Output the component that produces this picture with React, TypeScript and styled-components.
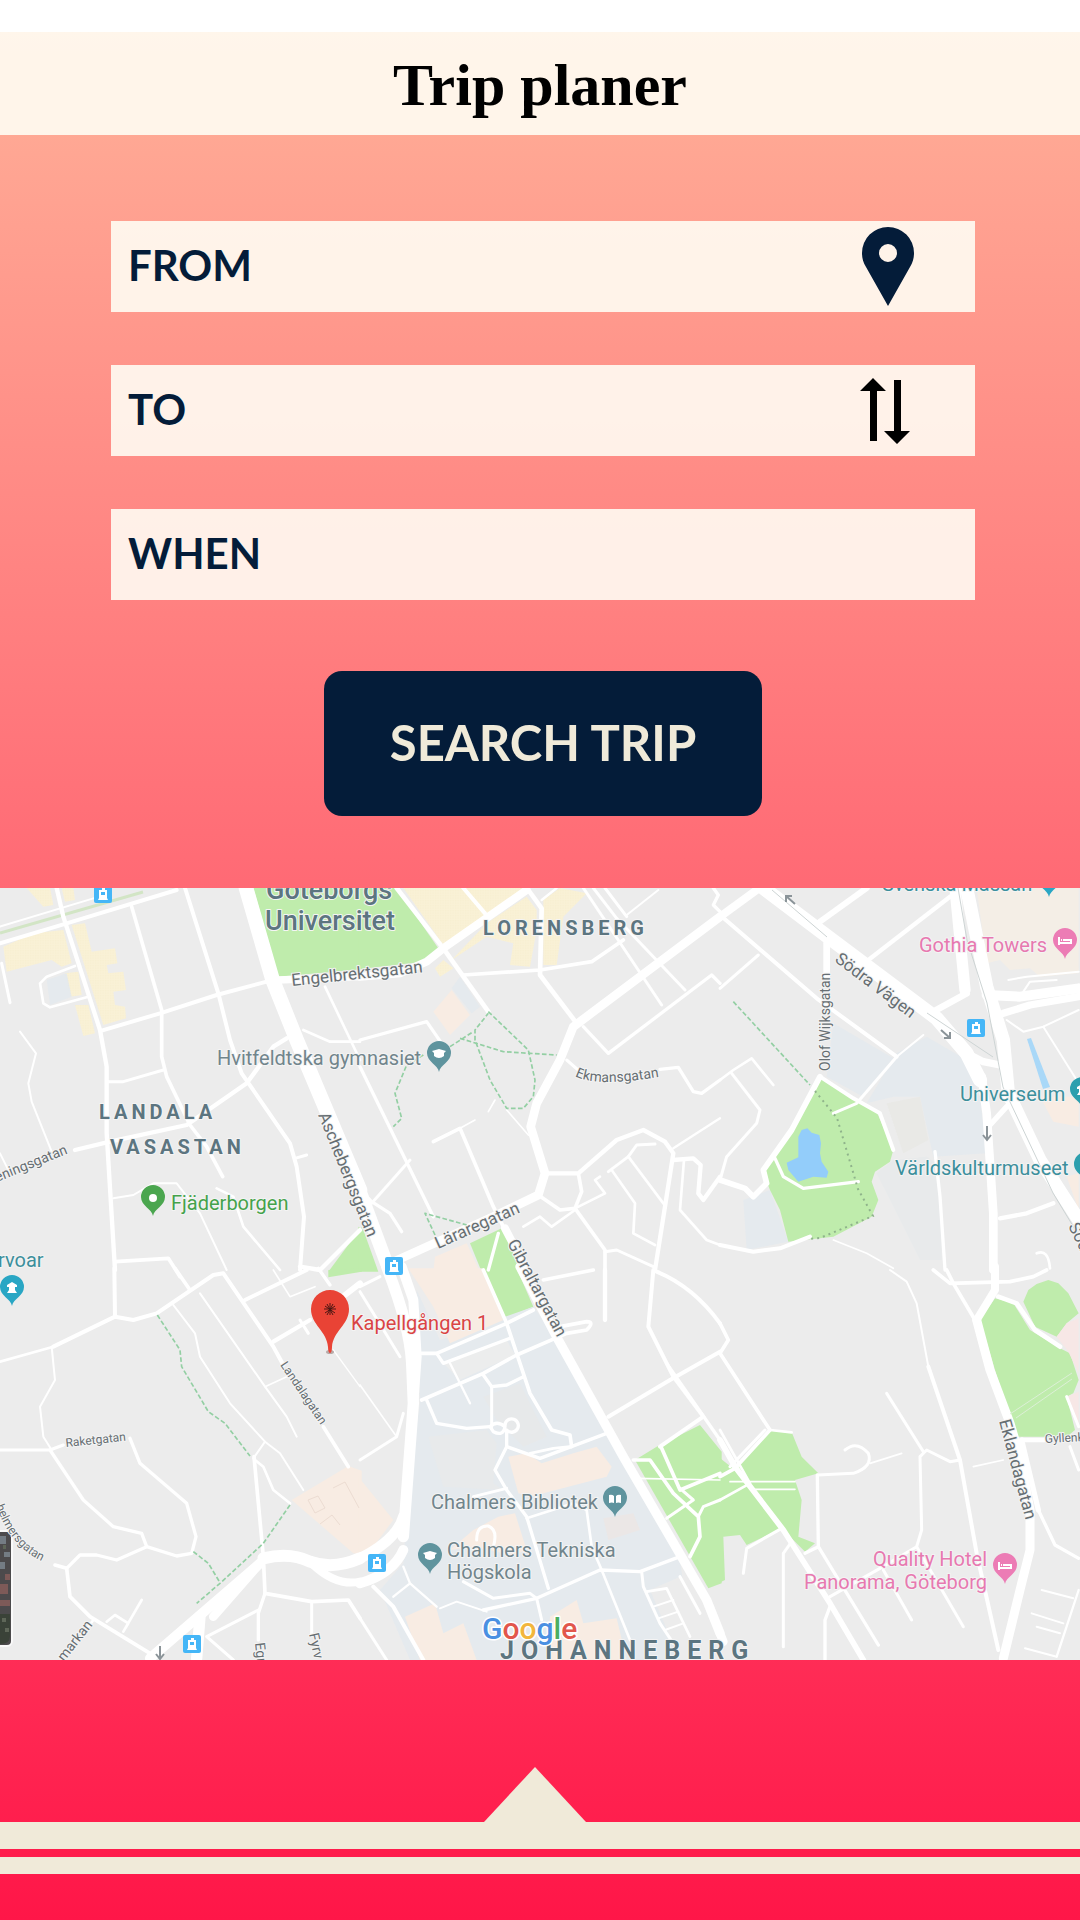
import React from "react";
import styled, { createGlobalStyle } from "styled-components";

const NAVY = "#041c39";
const CREAM = "#f0ead9";
const VEIL = "rgba(255, 255, 246, 0.88)";

const GlobalStyle = createGlobalStyle`
  *, *::before, *::after { box-sizing: border-box; }
  body { margin: 0; background: #ffffff; font-family: Lato, "Open Sans", sans-serif; }
`;

const Page = styled.div`
  display: flex;
  flex-direction: column;
  min-height: 100vh;
  padding-top: 32px;
`;

const Screen = styled.div`
  display: flex;
  flex: 1;
  flex-direction: column;
  background: linear-gradient(#ffb098 0%, #ff6a75 45%, #ff2d56 86%, #ff1648 100%);
`;

const Header = styled.header`
  display: flex;
  justify-content: center;
  padding: 18px 24px 15px;
  background: ${VEIL};
`;

const Title = styled.h1`
  margin: 0;
  color: #000000;
  font: 700 60px/70px "Liberation Serif", serif;
`;

const TripForm = styled.form`
  display: flex;
  flex-direction: column;
  align-items: center;
  padding: 86px 105px 72px 111px;
`;

const Fields = styled.div`
  display: flex;
  flex-direction: column;
  gap: 53px;
  width: 100%;
  margin-bottom: 71px;
`;

const Field = styled.div`
  display: flex;
  align-items: center;
  height: 91px;
  padding: 0 61px 0 17px;
  background: ${VEIL};
`;

const FieldLabel = styled.label`
  padding-bottom: 4px;
  color: ${NAVY};
  font-size: 42px;
  font-weight: 700;
  line-height: 52px;
`;

const FieldInput = styled.input`
  flex: 1;
  min-width: 0;
  height: 100%;
  padding: 0 16px;
  border: 0;
  outline: 0;
  background: transparent;
  color: ${NAVY};
  font: 400 36px/44px Lato, sans-serif;
`;

const IconButton = styled.button`
  display: flex;
  padding: 0;
  border: 0;
  background: transparent;
  cursor: pointer;
`;

const SearchButton = styled.button`
  width: 438px;
  max-width: 100%;
  padding: 41px 24px 44px;
  border: 0;
  border-radius: 18px;
  background: ${NAVY};
  color: ${CREAM};
  font: 700 49px/60px Lato, sans-serif;
  cursor: pointer;
`;

const MapFrame = styled.section`
  display: flex;
  background: #ececec;
`;

const MapDrawing = styled.svg`
  display: block;
  width: 100%;
  height: auto;
  font-family: Roboto, sans-serif;
`;

const Footer = styled.footer`
  display: flex;
  flex: 1;
  flex-direction: column;
  padding-top: 107px;
`;

const PanelHandle = styled.div`
  display: flex;
  justify-content: center;
  padding-right: 10px;
`;

const Stripe = styled.div<{ $size: number; $after: number }>`
  height: ${(p) => p.$size}px;
  margin-bottom: ${(p) => p.$after}px;
  background: ${CREAM};
`;

type Shape = [fill: string, points: string];
type Road = [width: number, path: string];

interface Tile {
  x: number;
  y: number;
  areas: Shape[];
  roads: Road[];
  paths?: string[];
}

const GREEN = "#bfecac";
const SAND = "#f9f1d6";
const PEACH = "#f8ece3";
const CAMPUS = "#e5eaee";
const BLOCK = "#e8eaeb";

/* Each tile is drawn at three units per map pixel. */
const tiles: Tile[] = [
  {
    x: 0,
    y: 880,
    areas: [
      [GREEN, "760,24 1085,24 1085,268 835,290"],
      [GREEN, "1085,1040 985,1175 1085,1175"],
      [SAND, "10,200 100,160 190,150 215,250 185,260 155,240 20,275"],
      [SAND, "215,135 255,130 275,215 345,205 352,250 320,255 325,280 370,275 378,330 340,335 345,375 375,380 378,415 310,435"],
      [SAND, "195,280 235,275 245,345 210,350"],
      [SAND, "225,375 265,375 285,460 250,468"],
      [SAND, "80,24 150,24 160,75 130,80"],
      [SAND, "185,24 220,24 225,60 195,65"],
      [CAMPUS, "140,300 200,280 215,350 150,375"],
    ],
    roads: [
      [6, "M0,140 L280,55"],
      [12, "M0,190 L200,130 L530,30"],
      [13, "M170,24 L190,110 L300,450 L320,560 L320,760 L345,1170"],
      [11, "M395,80 L485,390 L485,530 L500,590 L570,735 L620,800 L668,890"],
      [12, "M555,24 L655,340 L690,480 L725,580 L870,790 L890,860 L912,1010 L900,1170"],
      [44, "M738,24 L818,300 L890,480 L1080,930"],
      [12, "M305,452 L480,400 L650,345 L800,305"],
      [8, "M225,258 L140,290 L120,310 L130,370 L150,382 L265,350"],
      [6, "M60,455 L108,520 L85,610 L95,665 L155,815"],
      [6, "M0,820 L30,880"],
      [13, "M225,810 L330,785 L560,735 L740,610 L820,500 L860,475"],
      [9, "M320,605 L370,605 L490,570"],
      [9, "M5,250 L30,368"],
      [9, "M885,835 L920,825"],
      [6, "M340,955 L400,945 L460,910 L530,910 L600,1000 L680,1170"],
      [8, "M650,925 L700,950 L730,1040 L840,1170"],
      [11, "M345,1145 L505,1135 L540,1190"],
      [13, "M900,1160 L960,1170 L1080,1050"],
      [8, "M910,450 L990,485 L1080,485"],
      [8, "M975,320 L1080,540"],
      [22, "M835,300 L1080,290"],
    ],
  },
  {
    x: 360,
    y: 880,
    areas: [
      [GREEN, "-5,24 110,24 235,205 190,245 -5,268"],
      [GREEN, "-5,1040 10,1050 55,1175 -5,1175"],
      [GREEN, "330,1090 425,1045 490,1175 365,1175"],
      [SAND, "130,24 500,24 250,195"],
      [SAND, "275,240 380,130 500,50 530,90 530,150 510,260 450,255 460,190 380,170"],
      [SAND, "550,60 600,24 680,40 610,110 590,255 550,255"],
      [SAND, "225,265 250,240 280,265 240,290"],
      [PEACH, "220,395 275,330 330,405 270,465"],
      [CAMPUS, "275,325 300,290 360,380 335,400"],
      [PEACH, "220,1175 225,1130 320,1090 360,1175"],
    ],
    roads: [
      [24, "M0,290 L120,280 L200,245 L250,205 L500,30"],
      [14, "M110,24 L250,205 L385,395"],
      [12, "M310,24 L375,100"],
      [14, "M505,30 L545,85 L540,285 L650,430"],
      [7, "M545,60 L590,24"],
      [11, "M310,285 L540,270 L695,245 L790,180"],
      [26, "M1080,110 L640,440 L600,540 L530,670 L512,740 L555,880 L535,945 L400,1010 L90,1150"],
      [9, "M670,24 L905,375"],
      [9, "M700,24 L770,115 L975,330"],
      [9, "M735,24 L800,110"],
      [6, "M800,105 L895,30"],
      [10, "M670,440 L745,520 L1055,285 L1080,310"],
      [9, "M620,540 L660,575"],
      [10, "M900,568 L955,562 L1000,635 L1025,640 L1080,600"],
      [10, "M0,480 L200,425 L245,490"],
      [10, "M0,560 L220,1010"],
      [10, "M0,930 L35,965 L90,1000 L125,1055"],
      [9, "M150,840 L35,970"],
      [11, "M220,785 L300,745 L400,980 L440,1060"],
      [5, "M300,745 L345,720"],
      [5, "M440,690 L505,765"],
      [5, "M385,695 L405,660"],
      [13, "M555,880 L655,880 L770,780 L850,750 L915,785 L940,820 L915,980 L885,1170"],
      [11, "M655,880 L665,935 L645,985 L600,990 L535,945"],
      [11, "M645,985 L735,1110 L735,1170"],
      [9, "M735,1115 L770,1110 L880,1160"],
      [8, "M645,985 L735,940 L705,900 L720,890"],
      [8, "M490,1040 L540,1010 L575,1040 L645,990"],
      [9, "M745,875 L805,830 L830,795 L885,792"],
      [8, "M805,830 L910,970"],
      [8, "M755,870 L825,970 L820,1060 L885,1095"],
      [13, "M940,840 L1000,835 L1022,855 L1015,940 L1030,960 L1080,890"],
      [7, "M940,805 L1080,715"],
      [8, "M972,840 L960,990 L1040,1080 L1080,1095"],
      [10, "M1060,24 L1075,45 L1060,75 L1080,95"],
      [10, "M415,1060 L385,1170"],
      [24, "M435,1045 L500,1170"],
      [40, "M-20,880 L80,1150"],
    ],
    paths: [
      "M385,395 L505,510 L525,600 L520,650 L490,685 L440,685 L390,600 L345,480 L345,450 L385,400",
      "M270,500 L340,455",
      "M300,475 L430,515 L590,525",
      "M190,525 L140,555 L105,640 L125,715 L100,740",
      "M225,1065 L195,1000 L320,1035",
    ],
  },
  {
    x: 720,
    y: 880,
    areas: [
      [CAMPUS, "340,430 520,535 430,650 320,590"],
      [CAMPUS, "530,520 620,470 740,540 780,650 800,820 640,830 600,650 520,650 440,670"],
      [BLOCK, "470,880 520,840 620,830 660,860 665,1140 600,1140"],
      [CAMPUS, "70,960 150,930 205,1085 80,1110"],
      [GREEN, "300,595 380,640 470,695 520,810 510,845 465,875 455,905 475,960 455,1010 340,1070 205,1085 180,990 150,930 130,880 160,830 240,700"],
      ["#93cdfa", "235,770 245,750 262,745 275,758 298,765 303,790 300,820 305,845 325,875 320,893 280,890 235,905 205,870 200,848 235,832"],
      ["#e9e9e6", "500,670 600,650 625,780 550,820"],
      ["#f4eee6", "770,24 1076,24 1076,280 960,290 930,265 870,270 840,240 800,250"],
      [PEACH, "960,650 1076,650 1076,740 1000,725"],
      [PEACH, "1040,890 1076,880 1076,990"],
    ],
    roads: [
      [24, "M0,110 L110,30"],
      [42, "M130,24 L330,175 L650,415 L740,520 L780,600"],
      [18, "M300,125 L440,24"],
      [13, "M445,240 L690,50"],
      [12, "M0,105 L290,355 L530,530"],
      [6, "M610,465 L530,530"],
      [9, "M530,530 L410,670 L340,700"],
      [9, "M115,225 L0,325"],
      [20, "M320,190 L320,290"],
      [34, "M705,24 L735,330"],
      [40, "M740,24 L800,320 L850,480 L865,640 L960,840 L1076,1020"],
      [20, "M640,395 L740,340"],
      [30, "M800,345 L900,350 L1076,325"],
      [22, "M850,400 L930,375 L1076,350"],
      [22, "M740,520 L790,545 L840,555"],
      [26, "M785,590 L800,700 L820,1000 L820,1170"],
      [16, "M810,735 L860,680"],
      [13, "M840,1015 L920,1000 L1000,970"],
      [17, "M300,590 L215,750 L130,870 L140,910 L100,950 L75,925 L0,900"],
      [12, "M300,590 L400,655 L480,700 L520,810"],
      [10, "M165,835 L190,890 L250,925 L415,905"],
      [12, "M0,1095 L100,1115 L180,1105 L270,1070"],
      [5, "M340,1080 L440,1120 L520,1165"],
      [8, "M0,600 L40,570 L95,535 L160,615"],
      [9, "M35,580 L120,690 L110,730 L20,830 L0,900"],
      [10, "M645,815 L660,950 L675,1170"],
      [6, "M865,300 L920,290 L1076,275"],
      [6, "M910,335 L930,305 L1010,300"],
      [6, "M860,420 L910,455 L970,440 L1076,390"],
      [6, "M970,440 L1070,600"],
      [8, "M950,1120 Q985,1105 990,1165"],
    ],
    paths: ["M40,365 L270,615"],
  },
  {
    x: 0,
    y: 1270,
    areas: [
      [GREEN, "985,0 1085,-5 1085,5 985,22"],
      [PEACH, "1045,588 1085,602 1085,855 1060,850 875,690"],
    ],
    roads: [
      [12, "M343,-5 L345,140 L160,230"],
      [8, "M160,230 L0,275"],
      [12, "M345,140 L400,150 L470,130 L640,15 L670,10 L820,230 L850,285"],
      [11, "M970,470 L1045,590"],
      [11, "M525,-5 L570,60"],
      [13, "M820,215 L930,150"],
      [12, "M735,90 L920,0"],
      [6, "M520,105 L585,190 L600,260 L690,400 L795,515 L760,565"],
      [6, "M795,515 L840,550 L910,660"],
      [6, "M600,70 L795,350 L860,440 L890,500"],
      [5, "M795,350 L860,320"],
      [6, "M155,230 L165,330 L120,410 L130,500 L155,540"],
      [9, "M0,540 L150,540 L190,525"],
      [10, "M390,505 L420,580 L560,700 L588,800 L575,850 L530,858 L440,830 L425,790 L340,770 L250,690 L150,540"],
      [10, "M200,895 L240,855 L290,855 L350,870 L440,830"],
      [11, "M165,885 L200,895 L210,980 L270,1040 L450,1150"],
      [8, "M280,1050 L250,1090"],
      [8, "M320,1055 L345,1035 L385,1060 L370,1085 L425,990"],
      [11, "M762,560 L790,860 L795,970 L935,995 L1045,990 L1080,1045"],
      [9, "M935,995 L935,1090"],
      [10, "M795,970 L775,1030 L775,1110"],
      [9, "M775,1020 L620,1100 L700,1170"],
      [8, "M765,570 L790,590 L820,660 L870,700"],
      [30, "M450,1165 L780,880"],
      [36, "M790,865 Q870,845 930,875 Q1000,900 1080,865"],
      [24, "M940,885 Q1010,950 1080,935"],
      [26, "M780,880 L640,1040"],
      [34, "M600,1040 L590,1165"],
      [10, "M955,-5 L990,45"],
      [18, "M1035,75 L1080,40"],
      [4, "M1000,240 L1080,350"],
      [9, "M900,150 L925,190"],
      [5, "M820,0 L870,80 L945,50"],
    ],
    paths: [
      "M472,135 L540,240 L545,290 L625,425 L675,460 L750,558",
      "M870,705 L790,820 L660,940 L590,1000",
      "M580,845 L625,880 L660,938",
    ],
  },
  {
    x: 360,
    y: 1270,
    areas: [
      [GREEN, "365,-5 470,-5 520,110 435,145"],
      [CAMPUS, "170,60 240,210 520,110 600,220 740,470 960,870 1000,1170 150,1170 60,960 130,880 150,600 180,400"],
      ["#ececec", "870,960 960,920 1045,1010 1080,1090 1080,1170 960,1170"],
      [BLOCK, "205,500 380,480 410,520 400,640 430,660 250,650"],
      ["#e7e9ea", "370,380 480,340 560,500 490,530 410,450"],
      ["#eceded", "250,280 440,210 465,255 300,330"],
      ["#ebe7e6", "730,745 820,730 840,780 745,810"],
      [PEACH, "145,-5 365,-5 430,150 270,220 220,110"],
      [PEACH, "445,560 500,550 545,580 640,550 710,530 755,590 740,620 510,680 475,670"],
      [PEACH, "415,740 465,730 500,840 450,860 430,850 340,830 270,840 340,780"],
      [PEACH, "135,1040 225,1000 250,1090 310,1060 350,1170 180,1170"],
      [PEACH, "570,1040 650,990 670,1060 770,1045 800,1170 560,1170"],
      [PEACH, "-5,620 100,750 40,830 -5,850"],
      [GREEN, "825,570 890,530 1020,465 1085,545 1085,940 1045,955"],
    ],
    roads: [
      [34, "M80,-10 Q150,170 155,280 L160,400 L130,800"],
      [30, "M125,-10 L160,90 L170,260 L160,400"],
      [32, "M0,865 Q110,810 130,740"],
      [30, "M0,940 Q100,910 130,840"],
      [28, "M480,-10 L595,210 L790,560 L1040,990 L1080,1090"],
      [11, "M370,0 L440,160 L510,370 L575,480 L630,495 L635,530"],
      [11, "M185,250 L230,250 L440,160 L520,120"],
      [10, "M230,250 L250,280 L450,205"],
      [11, "M185,390 L370,310 L470,255 L620,190 L680,180 Q705,155 680,155 L600,170"],
      [10, "M370,315 L395,350 L440,345 L490,320"],
      [9, "M395,350 L395,470"],
      [7, "M270,280 L330,400"],
      [10, "M200,390 L230,460 L320,475 L390,470"],
      [10, "M390,470 Q410,450 435,470 Q430,500 400,485 Z"],
      [10, "M435,465 A20,20 0 1 1 440,480 L440,530 L405,600 L440,660 L500,740 L565,955"],
      [10, "M440,530 L540,565 L740,490"],
      [8, "M510,550 L580,535 L630,530"],
      [9, "M340,680 L440,655"],
      [12, "M745,440 L930,330 L1080,245"],
      [11, "M550,30 L700,0"],
      [13, "M735,0 L735,150"],
      [12, "M880,0 L865,170 L940,320 L1030,440 L900,530"],
      [10, "M920,280 L1080,510"],
      [12, "M890,5 Q1000,50 1080,160"],
      [8, "M500,745 L640,700 L680,720 L695,830 L725,900 L810,1110"],
      [10, "M370,1020 L530,985 L720,900 L840,905 L960,860"],
      [9, "M530,985 L545,1050"],
      [6, "M240,1015 L290,995 L380,1025"],
      [9, "M310,935 L400,985 L510,970 L530,985"],
      [9, "M845,905 L850,950 L900,1060 L940,1120"],
      [8, "M860,965 L920,955 L990,1100"],
      [6, "M880,1010 L940,990 M895,1045 L955,1025 M915,1080 L970,1060"],
      [9, "M960,920 L1020,1030"],
      [9, "M350,810 Q350,765 385,768 Q415,780 400,830"],
      [9, "M0,570 L110,500 L130,430"],
      [5, "M0,345 L110,500"],
      [9, "M0,65 L40,130 L120,260"],
      [9, "M0,50 L60,20"],
      [12, "M40,950 L100,1010 L190,1170"],
      [7, "M100,980 L150,940 L230,1010 M150,940 L130,890"],
      [9, "M0,1045 L80,1170"],
      [11, "M905,535 L960,660 L1080,610"],
      [11, "M820,570 L870,570 L940,670 L1015,740 L1020,800 L990,860"],
      [9, "M1015,740 L1030,710 L1080,690"],
      [9, "M920,745 L1000,690 L960,655"],
      [5, "M830,625 L1080,630"],
    ],
  },
  {
    x: 720,
    y: 1270,
    areas: [
      [GREEN, "-5,560 45,600 150,480 215,487 245,560 295,610 225,630 245,690 235,800 285,820 255,845 185,775 80,825 60,795 10,800 15,930 -5,940"],
      [GREEN, "780,150 825,85 880,100 930,180 1020,235 1050,250 1076,330 1060,370 1040,380 1065,480 1040,500 890,500 870,450"],
      [GREEN, "910,95 925,60 950,42 985,30 1015,40 1045,70 1076,130 1040,160 1010,200 945,170"],
      ["#f7e7e6", "1010,200 1040,160 1076,145 1076,310 1045,245"],
      ["#f7e7e6", "1040,380 1076,365 1076,470"],
    ],
    roads: [
      [11, "M0,160 L25,210 L0,250 L150,480 L45,595 L0,620"],
      [9, "M135,480 L30,590"],
      [17, "M0,510 L45,590 L190,780 L330,1000 L430,1170"],
      [8, "M0,690 L90,640 L0,480"],
      [8, "M150,480 L215,487"],
      [5, "M30,635 L225,635 M90,658 L225,658"],
      [9, "M295,615 L400,610 Q460,590 445,550 Q410,510 375,540"],
      [5, "M450,580 L545,550"],
      [10, "M292,615 L295,830 L475,1125"],
      [10, "M295,830 L255,850"],
      [9, "M185,775 L80,835 L70,910"],
      [9, "M215,815 L190,850 L190,1130"],
      [9, "M330,980 L480,895 L590,830 L605,780 L600,560 L620,540 L690,575 L720,570"],
      [9, "M500,370 L610,545"],
      [10, "M330,1010 L315,1050 L315,1170"],
      [9, "M490,900 L575,1050"],
      [9, "M590,830 L730,1070"],
      [12, "M625,290 L720,570 L770,850 L835,1140"],
      [6, "M510,0 L560,35 L590,100 L625,290"],
      [11, "M640,0 L690,40 L870,35 L940,20 L980,0"],
      [11, "M680,0 L700,40 L765,150"],
      [24, "M825,-10 L825,60 L770,150"],
      [27, "M770,150 L810,300 L870,460 L900,560 L930,720 L930,840 L900,960 L850,1165"],
      [13, "M905,510 L975,510"],
      [16, "M905,510 L955,720"],
      [10, "M955,720 L1005,825 L1076,865"],
      [9, "M1040,380 L1076,470 M1050,530 L1076,600"],
      [14, "M835,80 L890,100 L945,180 L1020,230"],
      [7, "M1076,960 L1010,1160"],
      [6, "M965,960 L1060,985 M935,1030 L1030,1060 M950,1070 L1020,1090 M915,1135 L1010,1160"],
      [5, "M760,590 L850,570"],
      [26, "M0,1090 L10,1115"],
    ],
  },
];

interface Label {
  text: string;
  x: number;
  y: number;
  size: number;
  color: string;
  turn?: number;
  weight?: number;
  spacing?: number;
  end?: boolean;
}

const SLATE = "#5c7580";
const STREET = "#666e72";
const TEAL = "#3c8f9c";
const PINK = "#e779b0";
const PLACE = "#71858c";

const labels: Label[] = [
  { text: "Göteborgs", x: 266, y: 899, size: 27, color: SLATE, weight: 500 },
  { text: "Universitet", x: 265, y: 930, size: 27, color: SLATE, weight: 500 },
  { text: "LORENSBERG", x: 483, y: 935, size: 20, color: SLATE, weight: 700, spacing: 4 },
  { text: "LANDALA", x: 99, y: 1119, size: 20, color: SLATE, weight: 700, spacing: 4 },
  { text: "VASASTAN", x: 110, y: 1154, size: 20, color: SLATE, weight: 700, spacing: 4 },
  { text: "JOHANNEBERG", x: 500, y: 1659, size: 25, color: SLATE, weight: 700, spacing: 7 },
  { text: "Hvitfeldtska gymnasiet", x: 217, y: 1065, size: 20, color: PLACE },
  { text: "Engelbrektsgatan", x: 292, y: 986, size: 17, color: STREET, turn: -6 },
  { text: "Södra Vägen", x: 834, y: 961, size: 17, color: STREET, turn: 37 },
  { text: "Olof Wijksgatan", x: 830, y: 1071, size: 14, color: STREET, turn: -90 },
  { text: "Aschebergsgatan", x: 318, y: 1115, size: 17, color: STREET, turn: 68 },
  { text: "Läraregatan", x: 438, y: 1249, size: 17, color: STREET, turn: -24 },
  { text: "Gibraltargatan", x: 507, y: 1243, size: 17, color: STREET, turn: 62 },
  { text: "eningsgatan", x: -3, y: 1182, size: 14, color: STREET, turn: -22 },
  { text: "Landalagatan", x: 280, y: 1365, size: 12, color: STREET, turn: 56 },
  { text: "Raketgatan", x: 66, y: 1447, size: 12, color: STREET, turn: -6 },
  { text: "Eklandagatan", x: 999, y: 1421, size: 17, color: STREET, turn: 75 },
  { text: "Gyllenk", x: 1045, y: 1443, size: 12, color: STREET, turn: -3 },
  { text: "Söd", x: 1068, y: 1226, size: 17, color: STREET, turn: 64 },
  { text: "markan", x: 64, y: 1662, size: 14, color: STREET, turn: -52 },
  { text: "Egn", x: 255, y: 1643, size: 14, color: STREET, turn: 84 },
  { text: "Fyrv", x: 309, y: 1634, size: 14, color: STREET, turn: 78 },
  { text: "Svenska Mässan", x: 882, y: 891, size: 20, color: TEAL },
  { text: "Gothia Towers", x: 919, y: 952, size: 20, color: PINK },
  { text: "Universeum", x: 960, y: 1101, size: 20, color: TEAL },
  { text: "Världskulturmuseet", x: 895, y: 1175, size: 20, color: TEAL },
  { text: "Fjäderborgen", x: 171, y: 1210, size: 20, color: "#45a24b" },
  { text: "rvoar", x: -2, y: 1267, size: 20, color: TEAL },
  { text: "Kapellgången 1", x: 351, y: 1330, size: 20, color: "#da4444" },
  { text: "Chalmers Bibliotek", x: 431, y: 1509, size: 20, color: PLACE },
  { text: "Chalmers Tekniska", x: 447, y: 1557, size: 20, color: PLACE },
  { text: "Högskola", x: 447, y: 1579, size: 20, color: PLACE },
  { text: "Quality Hotel", x: 987, y: 1566, size: 20, color: PINK, end: true },
  { text: "Panorama, Göteborg", x: 987, y: 1589, size: 20, color: PINK, end: true },
];

const googleLetters: [string, string][] = [
  ["G", "#4a90e2"],
  ["o", "#e2574c"],
  ["o", "#f2b63c"],
  ["g", "#4a90e2"],
  ["l", "#4caf61"],
  ["e", "#e2574c"],
];

type Glyph = "dot" | "cap" | "bed" | "book" | "museum";

const glyphs: Record<Glyph, React.ReactNode> = {
  dot: <circle r="4" fill="#ffffff" />,
  cap: <path d="M-7,-3 L0,-5 L7,-3 L5,-1 V2 Q0,6 -5,2 V-1 Z" fill="#ffffff" />,
  bed: <path d="M-6,-4 V4 M-6,2 H6 V-1 H-2 M-4,-1 H-3" stroke="#ffffff" strokeWidth="2" fill="none" />,
  book: <path d="M-6,-4 Q-3,-5 -1,-3 V4 Q-3,3 -6,4 Z M6,-4 Q3,-5 1,-3 V4 Q3,3 6,4 Z" fill="#ffffff" />,
  museum: <path d="M-5,-3 L0,-6 L5,-3 V-1 H3 V2 L5,5 H-5 L-3,2 V-1 H-5 Z" fill="#ffffff" />,
};

const pins: { x: number; y: number; color: string; glyph: Glyph }[] = [
  { x: 439, y: 1054, color: "#5f949e", glyph: "cap" },
  { x: 153, y: 1198, color: "#4ba64f", glyph: "dot" },
  { x: 12, y: 1288, color: "#29a6c4", glyph: "museum" },
  { x: 615, y: 1499, color: "#5f949e", glyph: "book" },
  { x: 430, y: 1556, color: "#5f949e", glyph: "cap" },
  { x: 1005, y: 1566, color: "#ec7cb5", glyph: "bed" },
  { x: 1065, y: 941, color: "#ec7cb5", glyph: "bed" },
  { x: 1049, y: 879, color: "#29a6c4", glyph: "museum" },
  { x: 1082, y: 1090, color: "#2c9fae", glyph: "museum" },
  { x: 1086, y: 1165, color: "#2c9fae", glyph: "museum" },
];

const stops: [number, number][] = [
  [103, 894],
  [394, 1266],
  [976, 1028],
  [377, 1563],
  [192, 1644],
];

function CityMap() {
  return (
    <MapDrawing viewBox="0 888 1080 772" role="img" aria-label="Map of Göteborg">
      <defs>
        <pattern id="dots" width="5" height="5" patternUnits="userSpaceOnUse">
          <circle cx="1" cy="1" r="1" fill="#efe3bd" />
        </pattern>
        <path id="helmers" d="M-4,1506 Q14,1556 58,1567" />
        <path id="ekmans" d="M575,1076 Q596,1088 664,1076" />
      </defs>
      <rect y="888" width="1080" height="772" fill="#ececec" />
      {tiles.map((t) => (
        <g key={`a${t.x}-${t.y}`} transform={`translate(${t.x} ${t.y}) scale(${1 / 3})`}>
          {t.areas.map(([fill, points]) => (
            <polygon key={points} points={points} fill={fill} />
          ))}
        </g>
      ))}
      {tiles.map((t) => (
        <g key={`d${t.x}-${t.y}`} transform={`translate(${t.x} ${t.y}) scale(${1 / 3})`}>
          {t.areas
            .filter(([fill]) => fill === SAND)
            .map(([, points]) => (
              <polygon key={points} points={points} fill="url(#dots)" opacity="0.6" />
            ))}
        </g>
      ))}
      <path d="M0,933 L143,892" stroke="#d2e5c5" strokeWidth="3" />
      <path d="M1027,1039 L1031,1038 L1050,1087 L1043,1089 Z" fill="#a9d8f8" />
      {tiles.map((t) => (
        <g
          key={`r${t.x}-${t.y}`}
          transform={`translate(${t.x} ${t.y}) scale(${1 / 3})`}
          fill="none"
          stroke="#ffffff"
          strokeLinecap="round"
          strokeLinejoin="round"
        >
          {t.roads.map(([width, d]) => (
            <path key={d} d={d} strokeWidth={width} />
          ))}
          {t.paths?.map((d) => (
            <path key={d} d={d} stroke="#93cfa3" strokeWidth="5" strokeDasharray="14 7" strokeLinecap="butt" />
          ))}
        </g>
      ))}
      <g fill="none" stroke="#cdd4d4" strokeWidth="1">
        <path d="M772,890 L827,937 M927,1013 L993,1057" />
        <path d="M958,888 L967,940 L987,1003 L1003,1087 L1053,1193 L1079,1236" />
        <path d="M1010,1414 L1072,1373 M1016,1418 L1072,1379" stroke="#dcefd6" />
        <path d="M308,1500 l10,-4 l7,12 l-10,5 z M333,1488 l12,-6 l14,26 M320,1524 l12,-9 l8,10" stroke="#ecdcd2" />
      </g>
      <path d="M815,1091 L837,1118 L858,1189 L873,1216 L820,1238 L808,1239" fill="none" stroke="#8fb38b" strokeWidth="2" strokeDasharray="2 4" />
      <g fill="none" stroke="#8b9499" strokeWidth="2">
        <path d="M795,904 L786,896 M786,902 V896 H792" />
        <path d="M941,1030 L950,1038 M944,1038 H950 V1032" />
        <path d="M987,1126 V1139 M983,1135 L987,1140 L991,1135" />
        <path d="M160,1646 V1658 M156,1654 L160,1659 L164,1654" />
      </g>

      <g>
        <rect x="-6" y="1531" width="18" height="115" rx="5" fill="#4c4a4c" stroke="#fafafa" strokeWidth="2" />
        <path d="M0,1536 h6 v8 h-6 z M4,1552 h6 v5 h-6 z M0,1562 h5 v7 h-5 z" fill="#747c84" />
        <path d="M0,1584 h8 v10 h-8 z M5,1574 h5 v6 h-5 z M0,1600 h10 v6 h-10 z" fill="#7d5a58" />
        <path d="M0,1614 h10 v22 q0,8 -10,8 z" fill="#3a4238" />
        <path d="M2,1618 h4 v4 h-4 z M5,1628 h4 v4 h-4 z M3,1545 h3 v4 h-3 z" fill="#5e6658" />
      </g>

      {stops.map(([x, y]) => (
        <g key={x} transform={`translate(${x} ${y})`}>
          <rect x="-9" y="-9" width="18" height="18" rx="2" fill="#45b6f7" />
          <path d="M-1,-6 H2 V-4 H4 V4 L5,6 H-5 L-4,4 V-4 H-1 Z M-2,-2 V1 H2 V-2 Z" fill="#ffffff" fillRule="evenodd" />
        </g>
      ))}

      <g stroke="#f4f4f4" strokeWidth="2" paintOrder="stroke" strokeLinejoin="round">
        {labels.map((l) => (
          <text
            key={l.text}
            transform={`translate(${l.x} ${l.y}) rotate(${l.turn ?? 0})`}
            fontSize={l.size}
            fontWeight={l.weight ?? 400}
            letterSpacing={l.spacing ?? 0}
            fill={l.color}
            textAnchor={l.end ? "end" : "start"}
          >
            {l.text}
          </text>
        ))}
        <text fontSize="14" fill={STREET}>
          <textPath href="#ekmans">Ekmansgatan</textPath>
        </text>
        <text fontSize="12" fill={STREET}>
          <textPath href="#helmers">helmersgatan</textPath>
        </text>
        <text x="482" y="1639" fontSize="30" fontWeight="500" stroke="#ffffff" strokeWidth="3">
          {googleLetters.map(([letter, color], i) => (
            <tspan key={i} fill={color}>
              {letter}
            </tspan>
          ))}
        </text>
      </g>

      {pins.map((p) => (
        <g key={`${p.x}-${p.y}`} transform={`translate(${p.x} ${p.y})`}>
          <path d="M0,18 C-1,11 -12,8 -12,-1 A12,12 0 0 1 12,-1 C12,8 1,11 0,18 Z" fill={p.color} />
          {glyphs[p.glyph]}
        </g>
      ))}

      <g transform="translate(330 1309)">
        <ellipse cy="43" rx="4" ry="2" fill="#b8aaa8" />
        <path d="M0,44 C-1,44 -2,42 -2,38 C-3,22 -19,16 -19,0 A19,19 0 0 1 19,0 C19,16 3,22 2,38 C2,42 1,44 0,44 Z" fill="#e94335" />
        <path d="M-5,-3 L5,4 M5,-3 L-5,4 M0,-6 V6 M-6,0 H6 M-3,-5 L3,6 M3,-5 L-3,6" stroke="#4c1713" strokeWidth="1" />
      </g>
    </MapDrawing>
  );
}

export default function App() {
  return (
    <>
      <GlobalStyle />
      <Page>
        <Screen>
          <Header>
            <Title>Trip planer</Title>
          </Header>
          <main>
            <TripForm onSubmit={(e) => e.preventDefault()}>
              <Fields>
                <Field>
                  <FieldLabel htmlFor="from">FROM</FieldLabel>
                  <FieldInput id="from" type="text" />
                  <IconButton type="button" aria-label="Use current location">
                    <svg width="52" height="80" viewBox="0 0 52 80">
                      <path
                        d="M26,0 A26,26 0 0 0 0,26 C0,31 1,35 4,40 L26,79 L48,40 C51,35 52,31 52,26 A26,26 0 0 0 26,0 Z M26,17 A9,9 0 1 1 26,35 A9,9 0 1 1 26,17 Z"
                        fill={NAVY}
                        fillRule="evenodd"
                      />
                    </svg>
                  </IconButton>
                </Field>
                <Field>
                  <FieldLabel htmlFor="to">TO</FieldLabel>
                  <FieldInput id="to" type="text" />
                  <IconButton type="button" aria-label="Swap from and to">
                    <svg width="54" height="68" viewBox="0 0 54 68">
                      <path d="M13,1 L26,14 H17 V64 H10 V14 H0 Z" />
                      <path d="M37,67 L24,54 H34 V3 H41 V54 H50 Z" />
                    </svg>
                  </IconButton>
                </Field>
                <Field>
                  <FieldLabel htmlFor="when">WHEN</FieldLabel>
                  <FieldInput id="when" type="text" />
                </Field>
              </Fields>
              <SearchButton type="submit">SEARCH TRIP</SearchButton>
            </TripForm>
            <MapFrame>
              <CityMap />
            </MapFrame>
          </main>
          <Footer>
            <PanelHandle>
              <IconButton type="button" aria-label="Open panel">
                <svg width="102" height="55" viewBox="0 0 102 55">
                  <path d="M51,0 L102,55 H0 Z" fill={CREAM} />
                </svg>
              </IconButton>
            </PanelHandle>
            <Stripe $size={27} $after={8} />
            <Stripe $size={17} $after={46} />
          </Footer>
        </Screen>
      </Page>
    </>
  );
}
